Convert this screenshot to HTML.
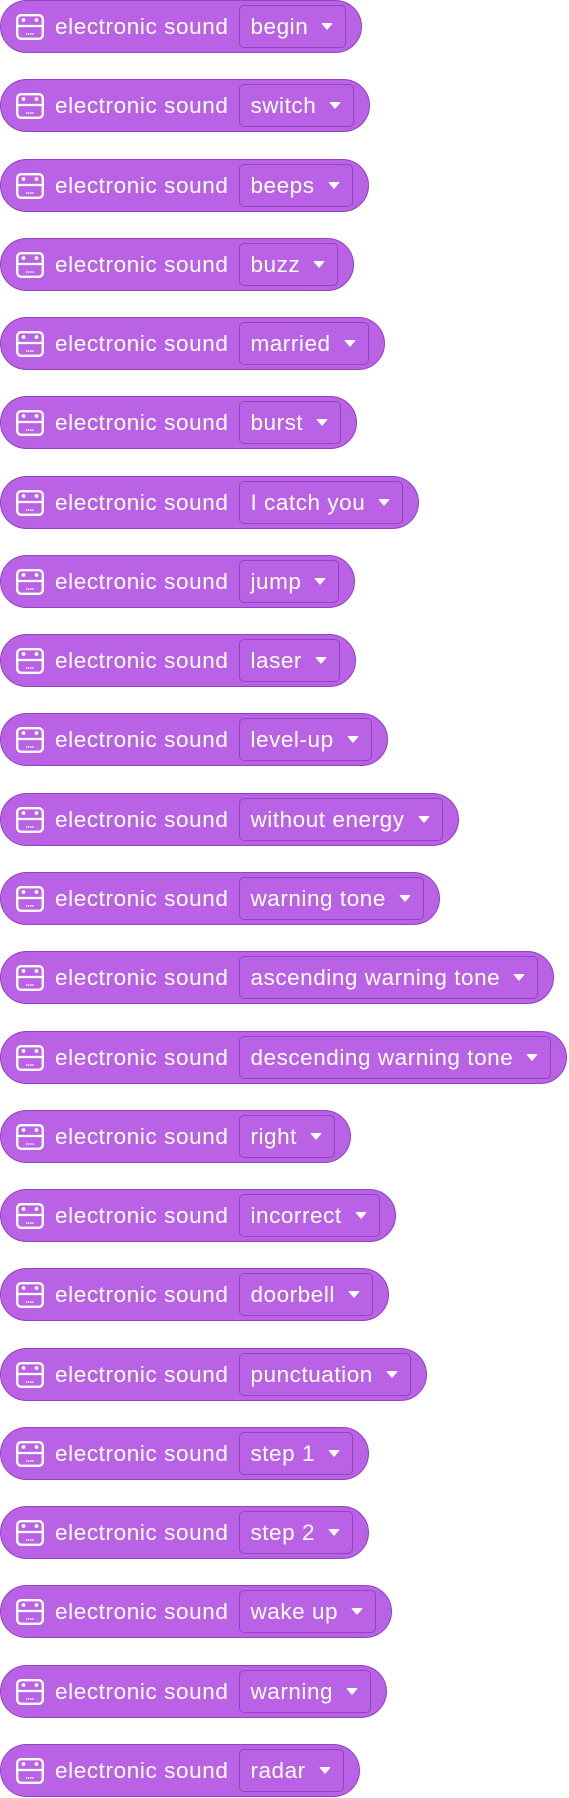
<!DOCTYPE html>
<html><head><meta charset="utf-8"><style>
body{margin:0;background:#fff;width:569px;height:1798px;overflow:hidden;font-family:"Liberation Sans",sans-serif;}
.b{position:absolute;left:0;height:51px;border:1px solid #9243bf;border-radius:27px;background:#b962e6;display:flex;align-items:center;box-sizing:content-box;}
.ic{margin-left:15px;width:28px;height:26px}
.t{color:#fff;font-size:22.5px;letter-spacing:0.6px;margin-left:11px;white-space:nowrap}
.d{margin-left:11px;margin-right:15px;height:41px;border:1px solid #9243bf;border-radius:5px;display:flex;align-items:center;padding:0 12px 0 10px;color:#fff;font-size:22.5px;letter-spacing:0.55px;white-space:nowrap}
.d::after{content:"";margin-left:13px;border-left:6px solid transparent;border-right:6px solid transparent;border-top:7px solid #fff;border-radius:2px}
</style></head><body>
<script>
var items=["begin","switch","beeps","buzz","married","burst","I catch you","jump","laser","level-up","without energy","warning tone","ascending warning tone","descending warning tone","right","incorrect","doorbell","punctuation","step 1","step 2","wake up","warning","radar"];
var svg='<svg class="ic" viewBox="0 0 28 26"><rect x="1.2" y="1.2" width="25.6" height="23.6" rx="4" fill="none" stroke="#fff" stroke-width="2.4"/><line x1="1" y1="12" x2="27" y2="12" stroke="#fff" stroke-width="2.2"/><circle cx="7.5" cy="6" r="1.9" fill="#fff"/><circle cx="20.5" cy="6" r="1.9" fill="#fff"/><line x1="10" y1="20" x2="18" y2="20" stroke="#fff" stroke-width="1.4" stroke-dasharray="1.3 0.8"/></svg>';
for(var i=0;i<items.length;i++){document.write('<div class="b" style="top:'+Math.round(i*79.27)+'px">'+svg+'<span class="t">electronic sound</span><span class="d">'+items[i]+'</span></div>');}
</script>
</body></html>
